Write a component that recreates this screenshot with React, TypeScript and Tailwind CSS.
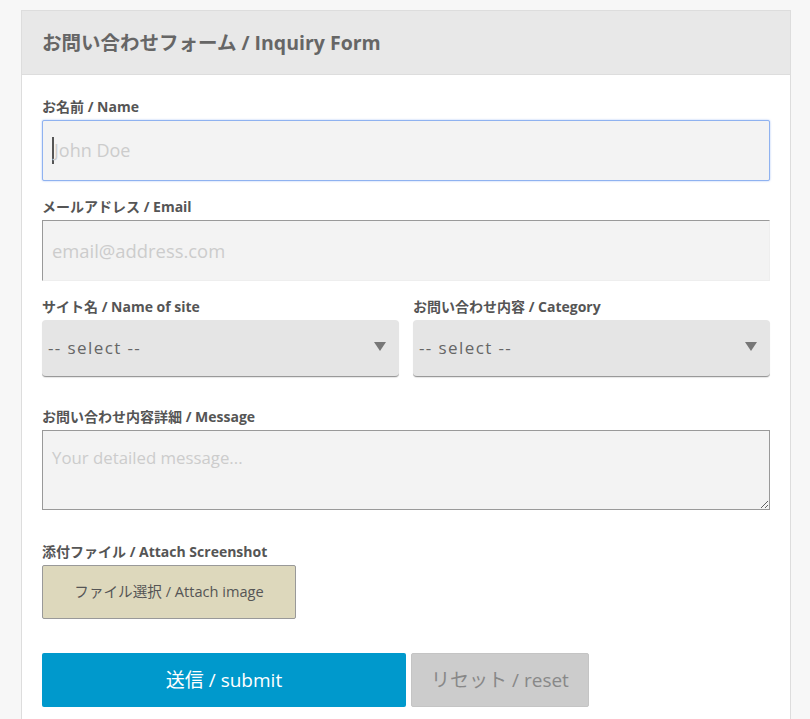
import { FC, ReactElement } from "react";

const font = "font-['Open_Sans','Noto_Sans_CJK_JP',sans-serif]";

const Label: FC<{ text: string }> = ({ text }): ReactElement => (
  <label className="block h-[20px] mb-[3px] text-[14px] leading-[20px] font-bold text-[#555]">{text}</label>
);

const Select: FC<{ label: string }> = ({ label }): ReactElement => (
  <div>
    <Label text={label} />
    <div className="relative h-[57px] rounded-[4px] bg-[#e5e5e5] border-b border-[#999] shadow-[0_1px_1px_rgba(0,0,0,0.1)] flex items-center px-[6px]">
      <span className="text-[17px] tracking-[1.4px] text-[#666]">-- select --</span>
      <span className="absolute right-[13px] top-[22px] w-0 h-0 border-l-[6px] border-r-[6px] border-t-[9px] border-l-transparent border-r-transparent border-t-[#777]" />
    </div>
  </div>
);

export default function App(): ReactElement {
  return (
    <div className={`min-h-[719px] bg-[#f7f7f7] pt-[10px] pl-[21px] ${font}`}>
      <div className="w-[770px] min-h-[709px] bg-white border border-[#ddd] border-b-0">
        <div className="h-[64px] bg-[#e8e8e8] border-b border-[#ddd] flex items-center px-[20px]">
          <h1 className="text-[19.5px] font-bold text-[#666]">お問い合わせフォーム / Inquiry Form</h1>
        </div>
        <form className="px-[20px] pt-[22px]">
          <Label text="お名前 / Name" />
          <div className="h-[61px] bg-[#f3f3f3] border border-[#8fb2f0] rounded-[2px] shadow-[0_0_2px_rgba(100,150,240,0.6)] flex items-center px-[9px]">
            <span className="w-[2px] h-[27px] bg-[#555]" />
            <span className="text-[18px] text-[#ccc]">John Doe</span>
          </div>

          <div className="mt-[16px]">
            <Label text="メールアドレス / Email" />
            <div className="h-[61px] bg-[#f3f3f3] border border-[#eee] border-t-[#999] border-l-[#999] flex items-center px-[9px]">
              <span className="text-[18.4px] text-[#ccc]">email@address.com</span>
            </div>
          </div>

          <div className="mt-[16px] grid grid-cols-2 gap-[14px]">
            <Select label="サイト名 / Name of site" />
            <Select label="お問い合わせ内容 / Category" />
          </div>

          <div className="mt-[30px]">
            <Label text="お問い合わせ内容詳細 / Message" />
            <textarea
              placeholder="Your detailed message..."
              className="block w-full h-[80px] bg-[#f3f3f3] border border-[#999] px-[9px] pt-[14px] text-[16.8px] placeholder:text-[#ccc] outline-none"
            />
          </div>

          <div className="mt-[32px]">
            <Label text="添付ファイル / Attach Screenshot" />
            <button type="button" className="w-[254px] h-[54px] bg-[#ddd8bc] border border-[#999] rounded-[2px] text-[14.6px] text-[#555]">
              ファイル選択 / Attach image
            </button>
          </div>

          <div className="mt-[34px] flex gap-[5px]">
            <button type="button" className="w-[364px] h-[54px] bg-[#0099cc] rounded-[2px] text-[19px] text-white">
              送信 / submit
            </button>
            <button type="button" className="w-[178px] h-[54px] bg-[#ccc] rounded-[2px] border border-[#c4c4c4] text-[19px] text-[#888]">
              リセット / reset
            </button>
          </div>
        </form>
      </div>
    </div>
  );
}
